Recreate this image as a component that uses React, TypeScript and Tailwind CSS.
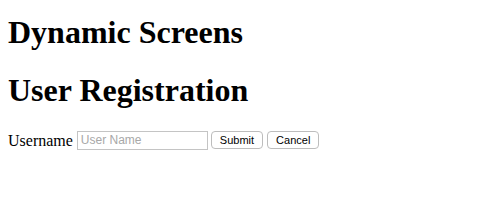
import React, { useState } from 'react';

export default function App() {
  const [username, setUsername] = useState('');

  return (
    <div className="px-2 text-black font-['Liberation_Serif',serif]">
      <h1 className="mt-[14px] mb-[21.44px] text-[32px] font-bold leading-[37px]">Dynamic Screens</h1>
      <h1 className="my-[21.44px] text-[32px] font-bold leading-[37px]">User Registration</h1>
      <form className="flex items-center text-[16px] leading-[19px]" onSubmit={(e) => e.preventDefault()}>
        <label htmlFor="username" className="mr-1">Username</label>
        <input
          id="username"
          value={username}
          onChange={(e) => setUsername(e.target.value)}
          placeholder="User Name"
          className="h-[19px] w-[131px] border border-[#c4c4c4] px-[3px] font-['Liberation_Sans',sans-serif] text-[12px] outline-none placeholder:text-[#a8a8a8]"
        />
        <button
          type="submit"
          className="ml-[3px] h-[18px] rounded-[4px] border border-[#bdbdbd] bg-white px-[8px] font-['Liberation_Sans',sans-serif] text-[11px] leading-none"
        >
          Submit
        </button>
        <button
          type="button"
          onClick={() => setUsername('')}
          className="ml-[4px] h-[18px] rounded-[4px] border border-[#bdbdbd] bg-white px-[8px] font-['Liberation_Sans',sans-serif] text-[11px] leading-none"
        >
          Cancel
        </button>
      </form>
    </div>
  );
}
